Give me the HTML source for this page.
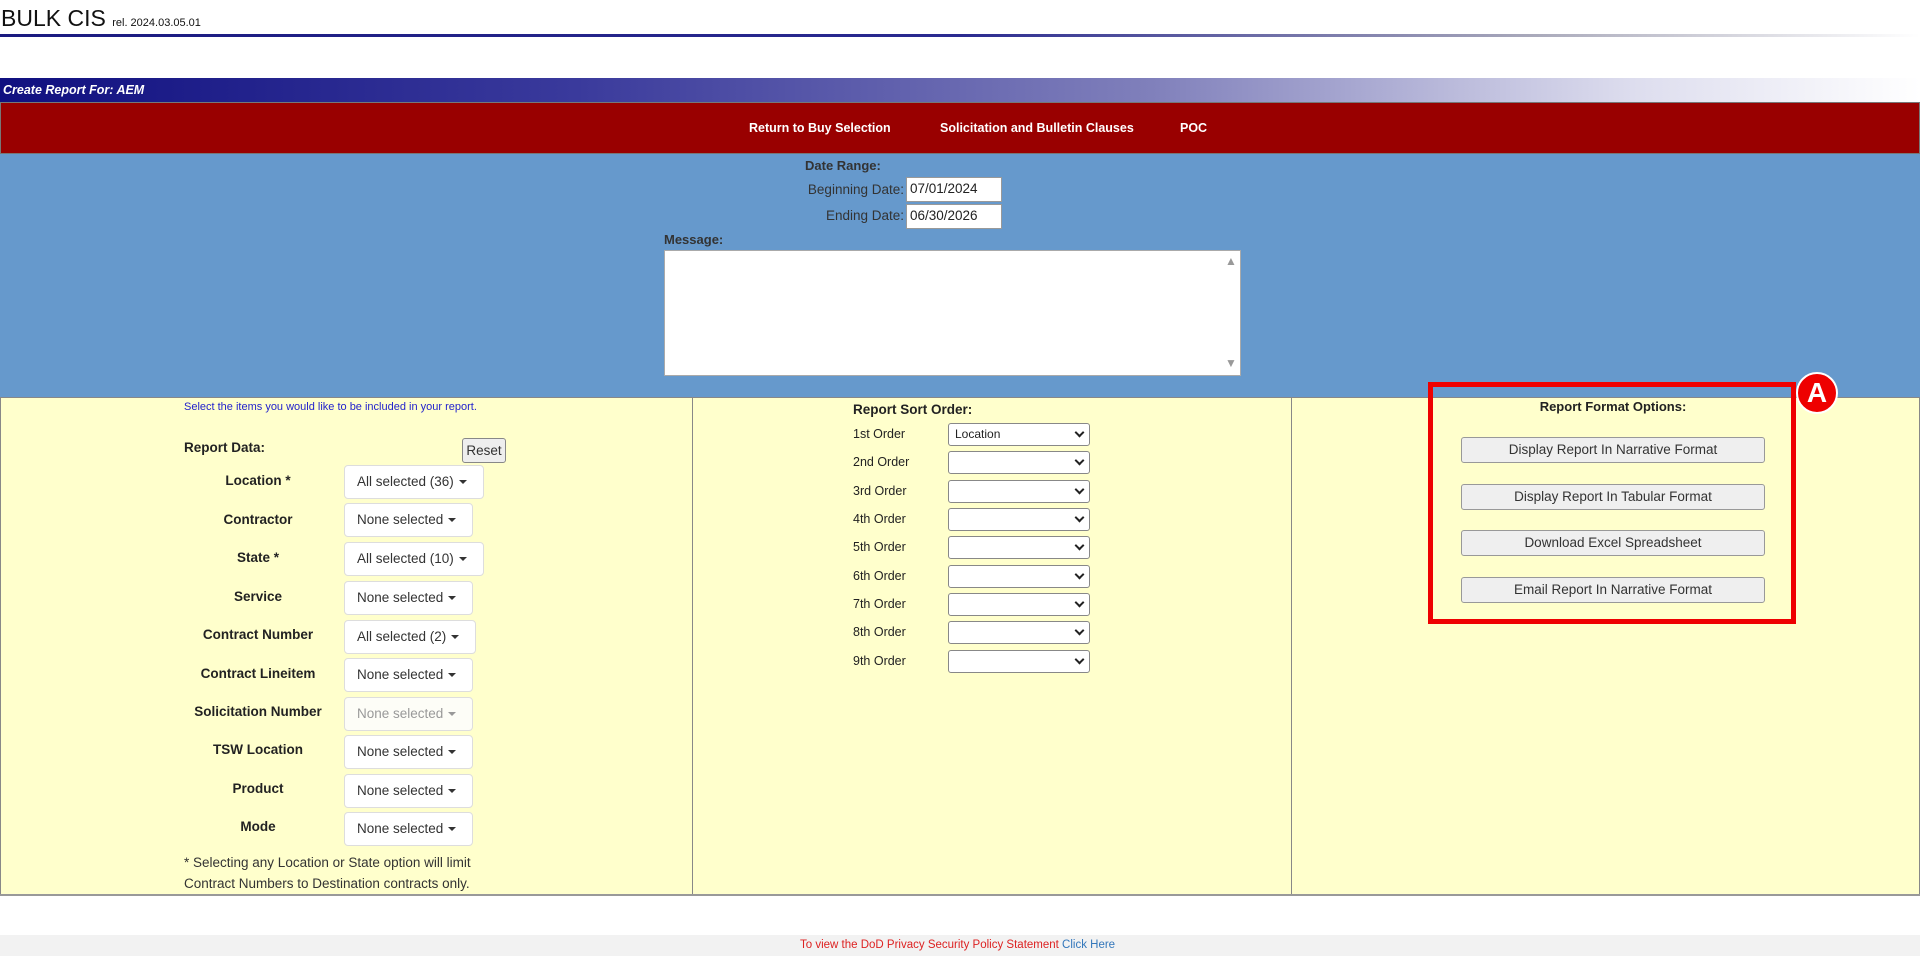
<!DOCTYPE html>
<html><head><meta charset="utf-8"><style>
*{box-sizing:border-box}
body{margin:0;width:1920px;height:956px;position:relative;overflow:hidden;background:#fff;font-family:"Liberation Sans",Arial,sans-serif;color:#222}
.a{position:absolute;white-space:nowrap}
.b{font-weight:bold}
.dd{position:absolute;left:344px;height:34px;background:#fff;border:1px solid #ddd;border-radius:4px;font-size:13.5px;color:#333;padding:0 0 0 12px;line-height:32px}
.dd i{display:inline-block;width:0;height:0;border-left:4px solid transparent;border-right:4px solid transparent;border-top:4px solid #333;margin-left:5px;vertical-align:middle}
.lbl{position:absolute;width:220px;left:148px;text-align:center;font-weight:bold;font-size:13.5px;color:#222}
.sel{position:absolute;left:948px;width:142px;height:23px;background:#fff;border:1px solid #888;border-radius:3px;font-size:12px;line-height:21px;padding-left:6px}
.sel:after{content:"";position:absolute;right:6px;top:5px;width:5px;height:5px;border-right:2px solid #222;border-bottom:2px solid #222;transform:rotate(45deg)}
.ord{position:absolute;left:853px;font-size:12.5px}
.btn{position:absolute;left:1461px;width:304px;height:26px;background:#efefef;border:1px solid #999;border-radius:3px;font-size:13.5px;color:#333;text-align:center;line-height:24px}
</style></head><body>
<div class="a" style="left:1px;top:5px;font-size:23px;color:#111">BULK CIS <span style="font-size:11px">rel. 2024.03.05.01</span></div>
<div class="a" style="left:0;top:34px;width:1920px;height:3px;background:linear-gradient(90deg,#1a1a80 0%,#2a2a90 50%,#aab 80%,#fff 100%)"></div>
<div class="a" style="left:0;top:78px;width:1920px;height:24px;background:linear-gradient(90deg,#101080 0%,#3a3a9c 30%,#8080bb 60%,#ddddee 85%,#fff 100%)"></div>
<div class="a" style="left:3px;top:83px;color:#fff;font-size:12.5px;font-weight:bold;font-style:italic">Create Report For: AEM</div>
<div class="a" style="left:0;top:102px;width:1920px;height:52px;background:#990000;border:1px solid #777"></div>
<div class="a b" style="left:749px;top:121px;color:#fff;font-size:12.5px">Return to Buy Selection</div>
<div class="a b" style="left:940px;top:121px;color:#fff;font-size:12.5px">Solicitation and Bulletin Clauses</div>
<div class="a b" style="left:1180px;top:121px;color:#fff;font-size:12.5px">POC</div>
<div class="a" style="left:0;top:154px;width:1920px;height:243px;background:#6699cc"></div>
<div class="a b" style="left:805px;top:158px;font-size:13px;color:#333">Date Range:</div>
<div class="a" style="left:700px;top:182px;width:204px;text-align:right;font-size:13.5px;color:#333">Beginning Date:</div>
<div class="a" style="left:906px;top:177px;width:96px;height:25px;background:#fff;border:1px solid #999;font-size:13.5px;padding:3px 3px;color:#222">07/01/2024</div>
<div class="a" style="left:700px;top:208px;width:204px;text-align:right;font-size:13.5px;color:#333">Ending Date:</div>
<div class="a" style="left:906px;top:204px;width:96px;height:25px;background:#fff;border:1px solid #999;font-size:13.5px;padding:3px 3px;color:#222">06/30/2026</div>
<div class="a b" style="left:664px;top:232px;font-size:13px;color:#333">Message:</div>
<div class="a" style="left:664px;top:250px;width:577px;height:126px;background:#fff;border:1px solid #aaa"></div>
<div class="a" style="left:1225px;top:254px;font-size:12px;color:#999">▲</div>
<div class="a" style="left:1225px;top:356px;font-size:12px;color:#999">▼</div>
<div class="a" style="left:0;top:397px;width:1920px;height:498px;background:#ffffcc;border:1px solid #888"></div>
<div class="a" style="left:692px;top:397px;width:1px;height:498px;background:#888"></div>
<div class="a" style="left:1291px;top:397px;width:1px;height:498px;background:#888"></div>
<div class="a" style="left:0;top:894px;width:1920px;height:2px;background:#999"></div>
<div class="a" style="left:184px;top:401px;font-size:11px;color:#2222cc">Select the items you would like to be included in your report.</div>
<div class="a b" style="left:184px;top:440px;font-size:13.5px">Report Data:</div>
<div class="a" style="left:462px;top:438px;width:44px;height:25px;background:#eee;border:1px solid #888;border-radius:3px;font-size:13.5px;text-align:center;line-height:23px;color:#333">Reset</div>
<div class="lbl" style="top:473px">Location *</div><div class="dd" style="top:465px;width:140px">All selected (36)<i></i></div>
<div class="lbl" style="top:512px">Contractor</div><div class="dd" style="top:503px;width:129px">None selected<i></i></div>
<div class="lbl" style="top:550px">State *</div><div class="dd" style="top:542px;width:140px">All selected (10)<i></i></div>
<div class="lbl" style="top:589px">Service</div><div class="dd" style="top:581px;width:129px">None selected<i></i></div>
<div class="lbl" style="top:627px">Contract Number</div><div class="dd" style="top:620px;width:132px">All selected (2)<i></i></div>
<div class="lbl" style="top:666px">Contract Lineitem</div><div class="dd" style="top:658px;width:129px">None selected<i></i></div>
<div class="lbl" style="top:704px">Solicitation Number</div><div class="dd" style="top:697px;width:129px;color:#999;background:#fdfdf7">None selected<i style="border-top-color:#999"></i></div>
<div class="lbl" style="top:742px">TSW Location</div><div class="dd" style="top:735px;width:129px">None selected<i></i></div>
<div class="lbl" style="top:781px">Product</div><div class="dd" style="top:774px;width:129px">None selected<i></i></div>
<div class="lbl" style="top:819px">Mode</div><div class="dd" style="top:812px;width:129px">None selected<i></i></div>
<div class="a" style="left:184px;top:855px;font-size:13.5px;color:#333">* Selecting any Location or State option will limit</div>
<div class="a" style="left:184px;top:876px;font-size:13.5px;color:#333">Contract Numbers to Destination contracts only.</div>
<div class="a b" style="left:853px;top:402px;font-size:13.5px">Report Sort Order:</div>
<div class="ord" style="top:427px">1st Order</div><div class="sel" style="top:423px">Location</div>
<div class="ord" style="top:455px">2nd Order</div><div class="sel" style="top:451px"></div>
<div class="ord" style="top:484px">3rd Order</div><div class="sel" style="top:480px"></div>
<div class="ord" style="top:512px">4th Order</div><div class="sel" style="top:508px"></div>
<div class="ord" style="top:540px">5th Order</div><div class="sel" style="top:536px"></div>
<div class="ord" style="top:569px">6th Order</div><div class="sel" style="top:565px"></div>
<div class="ord" style="top:597px">7th Order</div><div class="sel" style="top:593px"></div>
<div class="ord" style="top:625px">8th Order</div><div class="sel" style="top:621px"></div>
<div class="ord" style="top:654px">9th Order</div><div class="sel" style="top:650px"></div>
<div class="a b" style="left:1461px;top:399px;width:304px;text-align:center;font-size:13px">Report Format Options:</div>
<div class="btn" style="top:437px">Display Report In Narrative Format</div>
<div class="btn" style="top:484px">Display Report In Tabular Format</div>
<div class="btn" style="top:530px">Download Excel Spreadsheet</div>
<div class="btn" style="top:577px">Email Report In Narrative Format</div>
<div class="a" style="left:1428px;top:382px;width:368px;height:242px;border:5px solid #ee0000"></div>
<div class="a" style="left:1796px;top:372px;width:42px;height:42px;border-radius:50%;background:#ee0000;border:2px solid #fff;color:#fff;font-weight:bold;font-size:28px;text-align:center;line-height:38px">A</div>
<div class="a" style="left:0;top:935px;width:1920px;height:21px;background:#f2f2f2"></div>
<div class="a" style="left:800px;top:939px;font-size:11.5px;color:#dd2222">To view the DoD Privacy Security Policy Statement <span style="color:#3377bb">Click Here</span></div>
</body></html>
